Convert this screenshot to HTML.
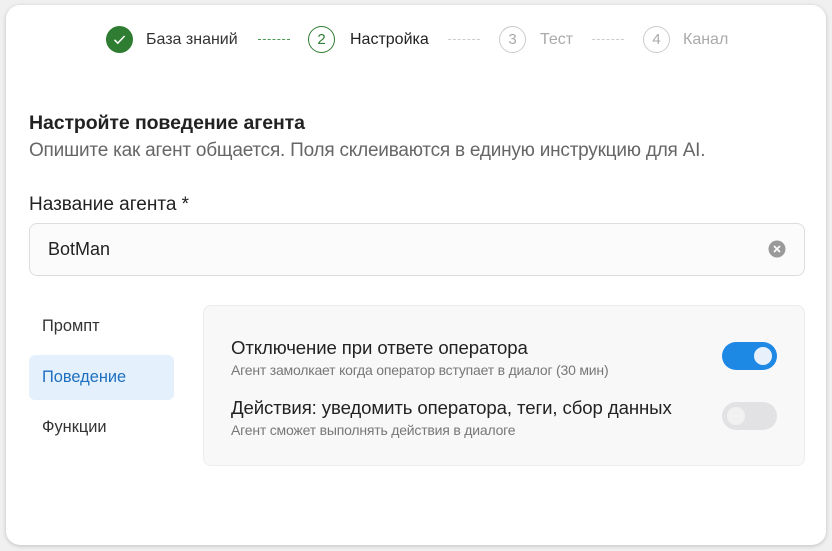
<!DOCTYPE html>
<html><head><meta charset="utf-8"><style>
*{box-sizing:border-box;margin:0;padding:0}
body{width:832px;height:551px;background:#f0f0f0;font-family:"Liberation Sans",sans-serif;position:relative;overflow:hidden;color:#222}
.card{position:absolute;left:6px;top:5px;width:820px;height:540px;background:#fff;border-radius:14px;box-shadow:0 1px 4px rgba(0,0,0,.2)}
.a{position:absolute;white-space:nowrap;line-height:1}
.c{position:absolute;width:27px;height:27px;border-radius:50%;font-size:15px;text-align:center;line-height:25px}
.dash{position:absolute;top:39px;height:0;border-top:1.5px dashed #ccc;width:32px}
.st{font-size:16px;top:32px}
.tg{position:absolute;width:55px;height:28px;border-radius:14px}
.kn{position:absolute;top:5px;width:18px;height:18px;border-radius:50%}
</style></head><body>
<div class="card"></div>
<div class="c" style="left:106px;top:26px;background:#2e7d32;border:1px solid #2e7d32">
<svg width="25" height="25" viewBox="0 0 25 25" style="position:absolute;left:0;top:0"><path d="M7.5 12.8l3.3 3.4 6.8-7.2" fill="none" stroke="#fff" stroke-width="1.5"/></svg></div>
<div class="a st" style="left:146px;color:#333">База знаний</div>
<div class="dash" style="left:258px;border-color:#4a9a50"></div>
<div class="c" style="left:308px;top:26px;border:1.5px solid #2e7d32;color:#2e7d32">2</div>
<div class="a st" style="left:350px;color:#222">Настройка</div>
<div class="dash" style="left:448px"></div>
<div class="c" style="left:499px;top:26px;border:1.5px solid #ccc;color:#aaa">3</div>
<div class="a st" style="left:540px;color:#aaa">Тест</div>
<div class="dash" style="left:592px"></div>
<div class="c" style="left:643px;top:26px;border:1.5px solid #ccc;color:#aaa">4</div>
<div class="a st" style="left:683px;color:#aaa">Канал</div>

<div class="a" style="left:29px;top:114px;font-size:19.5px;font-weight:bold;color:#222;letter-spacing:-0.1px">Настройте поведение агента</div>
<div class="a" style="left:29px;top:141px;font-size:19px;color:#666;letter-spacing:-0.22px">Опишите как агент общается. Поля склеиваются в единую инструкцию для AI.</div>
<div class="a" style="left:29px;top:195px;font-size:19px;color:#222">Название агента *</div>
<div class="a" style="left:29px;top:223px;width:776px;height:53px;border:1px solid #ddd;border-radius:8px;background:#fbfbfb"></div>
<div class="a" style="left:48px;top:240px;font-size:18px;color:#222">BotMan</div>
<svg class="a" style="left:768px;top:240px" width="18" height="18" viewBox="0 0 18 18"><circle cx="9" cy="9" r="8.5" fill="#9a9a9a"/><path d="M6 6l6 6M12 6l-6 6" stroke="#fff" stroke-width="1.6"/></svg>

<div class="a" style="left:42px;top:318px;font-size:16.4px;color:#333">Промпт</div>
<div class="a" style="left:29px;top:355px;width:145px;height:45px;background:#e4f1fc;border-radius:6px"></div>
<div class="a" style="left:42px;top:369px;font-size:16.4px;color:#1e6fc0">Поведение</div>
<div class="a" style="left:42px;top:419px;font-size:16.4px;color:#333">Функции</div>

<div class="a" style="left:203px;top:305px;width:602px;height:161px;background:#f8f8f8;border:1px solid #ececec;border-radius:8px"></div>
<div class="a" style="left:231px;top:339px;font-size:18.6px;color:#222;letter-spacing:-0.1px">Отключение при ответе оператора</div>
<div class="a" style="left:231px;top:363px;font-size:14px;color:#777;letter-spacing:-0.2px">Агент замолкает когда оператор вступает в диалог (30 мин)</div>
<div class="tg" style="left:722px;top:342px;background:#1e88e5"><div class="kn" style="right:5px;background:#e8f1fb"></div></div>
<div class="a" style="left:231px;top:399px;font-size:18.6px;color:#222;letter-spacing:-0.1px">Действия: уведомить оператора, теги, сбор данных</div>
<div class="a" style="left:231px;top:423px;font-size:14px;color:#777;letter-spacing:-0.2px">Агент сможет выполнять действия в диалоге</div>
<div class="tg" style="left:722px;top:402px;background:#e2e2e4"><div class="kn" style="left:5px;background:#f1f1f1"></div></div>
</body></html>
